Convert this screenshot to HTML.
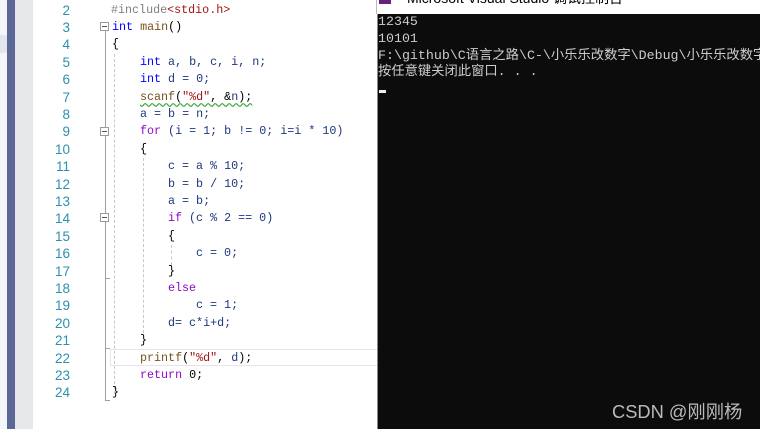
<!DOCTYPE html>
<html><head><meta charset="utf-8"><style>
body{margin:0;width:760px;height:429px;overflow:hidden;background:#fff;position:relative;font-family:"Liberation Mono","Noto Sans CJK SC",monospace}
.a{position:absolute}
.ln{position:absolute;left:40px;width:30px;text-align:right;color:#2b91af;font-size:13.5px;height:17.4px;line-height:17.4px;font-family:"Liberation Sans",sans-serif}
.c{position:absolute;font-size:11.7px;height:17.4px;line-height:17.4px;white-space:pre;color:#1f377f}
.k{color:#0000ff}.p{color:#8f08c4}.s{color:#a31515}.g{color:#808080}.f{color:#74531f}.o{color:#000}
.fold{position:absolute;left:100px;width:7px;height:7px;border:1px solid #999;background:#fff}
.fold:after{content:"";position:absolute;left:1px;top:3px;width:5px;height:1px;background:#555}
.con{position:absolute;left:378px;color:#ccc;font-size:13.3px;line-height:16.8px;white-space:pre;font-family:"Liberation Mono","Noto Sans CJK SC",monospace}
</style></head><body>
<div class="a" style="left:0;top:0;width:7px;height:429px;background:#f5f6fa"></div>
<div class="a" style="left:0;top:35px;width:7px;height:18px;background:#e4e6ee"></div>
<div class="a" style="left:7px;top:0;width:8px;height:429px;background:#5b6797"></div>
<div class="a" style="left:15px;top:0;width:18px;height:429px;background:#e6e7e8"></div>
<div class="a" style="left:105px;top:28px;width:1px;height:372px;background:#a0a0a0"></div>
<div class="a" style="left:105px;top:278px;width:5px;height:1px;background:#a0a0a0"></div>
<div class="a" style="left:105px;top:348px;width:5px;height:1px;background:#a0a0a0"></div>
<div class="a" style="left:105px;top:400px;width:5px;height:1px;background:#a0a0a0"></div>
<div class="a" style="left:114px;top:54px;width:0;height:340px;border-left:1px dashed #c8c8c8"></div>
<div class="a" style="left:143px;top:158px;width:0;height:175px;border-left:1px dashed #c8c8c8"></div>
<div class="a" style="left:171px;top:245px;width:0;height:20px;border-left:1px dashed #c8c8c8"></div>
<div class="a" style="left:110px;top:349px;width:268px;height:15px;border:1px solid #e5e5ea;border-right:none"></div>
<div class="fold" style="top:22px"></div>
<div class="fold" style="top:127px"></div>
<div class="fold" style="top:213px"></div>

<div class="ln" style="top:1.5px">2</div><div class="c" style="left:111px;top:1.5px"><span class="g">#include</span><span class="s">&lt;stdio.h&gt;</span></div>
<div class="ln" style="top:18.9px">3</div><div class="c" style="left:112px;top:18.9px"><span class="k">int</span><span class="o"> </span><span class="f">main</span><span class="o">()</span></div>
<div class="ln" style="top:36.3px">4</div><div class="c o" style="left:112px;top:36.3px">{</div>
<div class="ln" style="top:53.7px">5</div><div class="c" style="left:140px;top:53.7px"><span class="k">int</span> a, b, c, i, n;</div>
<div class="ln" style="top:71.1px">6</div><div class="c" style="left:140px;top:71.1px"><span class="k">int</span> d = 0;</div>
<div class="ln" style="top:88.5px">7</div><div class="c" style="left:140px;top:88.5px;text-decoration:underline wavy #3aa63a;text-underline-offset:3px"><span class="f">scanf</span><span class="o">(</span><span class="s">"%d"</span><span class="o">, &amp;</span>n<span class="o">);</span></div>
<div class="ln" style="top:105.9px">8</div><div class="c" style="left:140px;top:105.9px">a = b = n;</div>
<div class="ln" style="top:123.3px">9</div><div class="c" style="left:140px;top:123.3px"><span class="p">for</span> (i = 1; b != 0; i=i * 10)</div>
<div class="ln" style="top:140.7px">10</div><div class="c o" style="left:140px;top:140.7px">{</div>
<div class="ln" style="top:158.1px">11</div><div class="c" style="left:168px;top:158.1px">c = a % 10;</div>
<div class="ln" style="top:175.5px">12</div><div class="c" style="left:168px;top:175.5px">b = b / 10;</div>
<div class="ln" style="top:192.9px">13</div><div class="c" style="left:168px;top:192.9px">a = b;</div>
<div class="ln" style="top:210.3px">14</div><div class="c" style="left:168px;top:210.3px"><span class="p">if</span> (c % 2 == 0)</div>
<div class="ln" style="top:227.7px">15</div><div class="c o" style="left:168px;top:227.7px">{</div>
<div class="ln" style="top:245.1px">16</div><div class="c" style="left:196px;top:245.1px">c = 0;</div>
<div class="ln" style="top:262.5px">17</div><div class="c o" style="left:168px;top:262.5px">}</div>
<div class="ln" style="top:279.9px">18</div><div class="c p" style="left:168px;top:279.9px">else</div>
<div class="ln" style="top:297.3px">19</div><div class="c" style="left:196px;top:297.3px">c = 1;</div>
<div class="ln" style="top:314.7px">20</div><div class="c" style="left:168px;top:314.7px">d= c*i+d;</div>
<div class="ln" style="top:332.1px">21</div><div class="c o" style="left:140px;top:332.1px">}</div>
<div class="ln" style="top:349.5px">22</div><div class="c" style="left:140px;top:349.5px"><span class="f">printf</span><span class="o">(</span><span class="s">"%d"</span><span class="o">, </span>d<span class="o">);</span></div>
<div class="ln" style="top:366.9px">23</div><div class="c" style="left:140px;top:366.9px"><span class="p">return</span> <span class="o">0;</span></div>
<div class="ln" style="top:384.3px">24</div><div class="c o" style="left:112px;top:384.3px">}</div>

<div class="a" style="left:376px;top:0;width:384px;height:14px;background:#fff;border-left:1px solid #bbb;overflow:hidden">
<div class="a" style="left:2px;top:-4px;width:12px;height:8px;background:#68217a"></div>
<div class="a" style="left:30px;top:-12px;font:14px 'Liberation Sans','Noto Sans CJK SC',sans-serif;color:#000;white-space:nowrap">Microsoft Visual Studio 调试控制台</div>
</div>
<div class="a" style="left:377px;top:14px;width:383px;height:415px;background:#0c0c0c;border-left:1px solid #888"></div>
<div class="con" style="top:14px">12345
10101
F:\github\C语言之路\C-\小乐乐改数字\Debug\小乐乐改数字.exe
按任意键关闭此窗口. . .</div>
<div class="a" style="left:379px;top:90px;width:7px;height:3px;background:#eee"></div>
<div class="a" style="left:612px;top:398px;font:18.3px 'Liberation Sans','Noto Sans CJK SC',sans-serif;color:#bbb;white-space:nowrap">CSDN @刚刚杨</div>
</body></html>
